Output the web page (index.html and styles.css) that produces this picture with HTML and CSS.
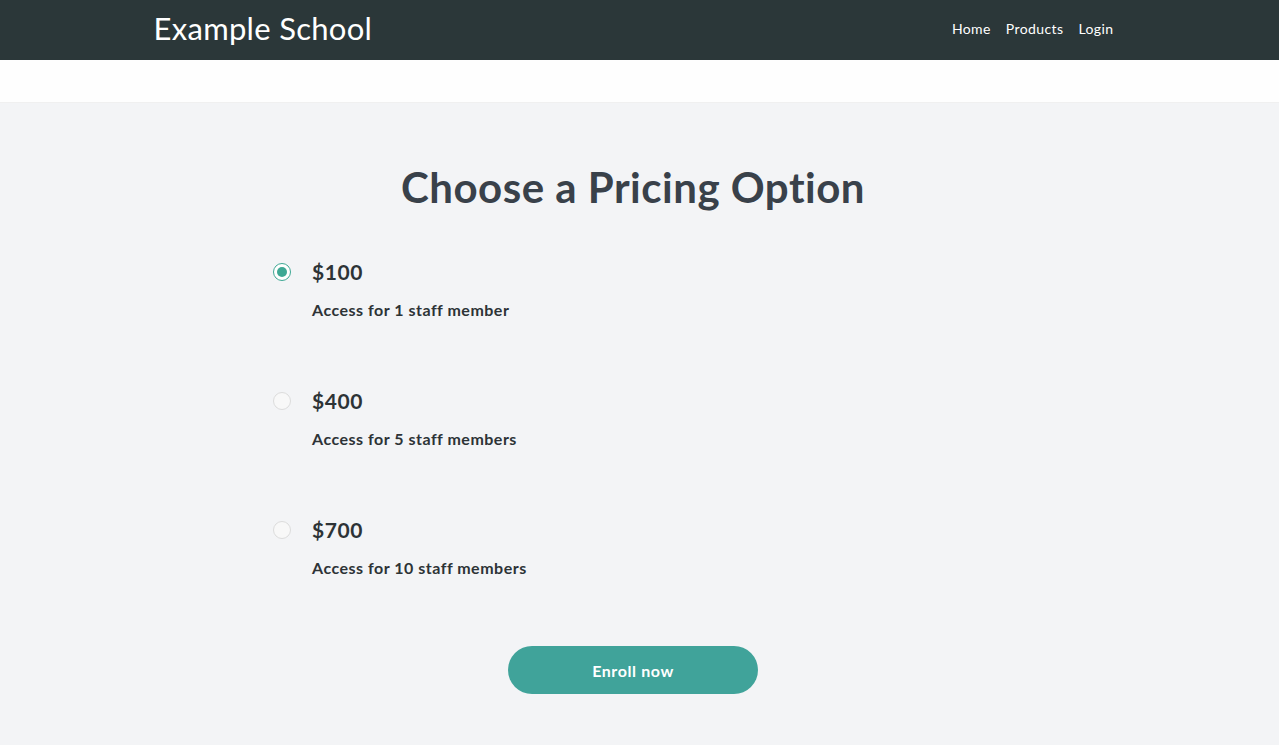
FILE: index.html
```html
<!DOCTYPE html>
<html lang="en">
<head>
  <meta charset="UTF-8" />
  <meta name="viewport" content="width=device-width, initial-scale=1" />
  <title>Example School - Pricing</title>
  <link rel="stylesheet" href="styles.css">
</head>
<body>

<header class="topbar">
  <div class="topbar-inner">
    <a class="brand" href="#">Example School</a>
    <nav class="nav">
      <a href="#">Home</a>
      <a href="#">Products</a>
      <a href="#">Login</a>
    </nav>
  </div>
</header>

<div class="subbar"></div>

<main class="pricing">
  <h1>Choose a Pricing Option</h1>

  <form class="options">
    <label class="option">
      <input type="radio" name="plan" value="100" checked />
      <span class="option-text">
        <span class="price">$100</span>
        <span class="desc">Access for 1 staff member</span>
      </span>
    </label>

    <label class="option">
      <input type="radio" name="plan" value="400" />
      <span class="option-text">
        <span class="price">$400</span>
        <span class="desc">Access for 5 staff members</span>
      </span>
    </label>

    <label class="option">
      <input type="radio" name="plan" value="700" />
      <span class="option-text">
        <span class="price">$700</span>
        <span class="desc">Access for 10 staff members</span>
      </span>
    </label>

    <div class="actions">
      <button type="button" class="enroll">Enroll now</button>
    </div>
  </form>
</main>

</body>
</html>
```

FILE: styles.css
```css
body {
  font-family: 'Lato', 'Noto Sans', sans-serif;
  background: #f3f4f6;
  margin: 0; padding: 0;
  color: #2d3336;
}
.topbar {
  background: #2b3739;
  height: 60px;
}
.topbar-inner {
  max-width: 972px;
  height: 100%;
  margin: 0 auto;
  display: flex;
  align-items: center;
  justify-content: space-between;
  padding: 0 12px 4px 0;
  box-sizing: border-box;
}
.brand {
  color: #fff;
  text-decoration: none;
  font-size: 31px;
  letter-spacing: 0.3px;
}
.nav {
  display: flex;
  gap: 15px;
}
.nav a {
  color: #fff;
  text-decoration: none;
  font-size: 14px;
  letter-spacing: 0.4px;
}
.subbar {
  background: #fefefe;
  height: 43px;
  border-bottom: 1px solid #f0f0f0;
  box-sizing: border-box;
}
.pricing {
  padding: 58px 13px 51px 0;
}
.pricing h1 {
  margin: 0;
  text-align: center;
  font-size: 42px;
  line-height: 52px;
  font-weight: 700;
  letter-spacing: 0.5px;
  color: #39414a;
}
.options {
  max-width: 720px;
  margin: 47px auto 0;
  display: flex;
  flex-direction: column;
  gap: 69px;
}
.option {
  display: flex;
  align-items: flex-start;
  gap: 21px;
  cursor: pointer;
}
.option input {
  appearance: none;
  -webkit-appearance: none;
  width: 18px;
  height: 18px;
  margin: 3px 0 0;
  border: 1px solid #dcdcdc;
  border-radius: 50%;
  background: #f8f8f8;
  display: grid;
  place-items: center;
  flex-shrink: 0;
}
.option input:checked {
  border-color: #3ea894;
  background: #fff;
}
.option input:checked::after {
  content: "";
  width: 10px;
  height: 10px;
  border-radius: 50%;
  background: #3ea894;
}
.option-text {
  display: flex;
  flex-direction: column;
  gap: 16px;
}
.price {
  font-size: 21px;
  line-height: 24px;
  font-weight: 700;
  letter-spacing: 0.6px;
  color: #2d3336;
}
.desc {
  font-size: 16px;
  line-height: 20px;
  font-weight: 700;
  letter-spacing: 0.5px;
  color: #2d3336;
}
.actions {
  display: flex;
  justify-content: center;
  margin-top: -1px;
}
.enroll {
  width: 250px;
  height: 48px;
  border: none;
  border-radius: 24px;
  background: #40a39a;
  color: #fff;
  font-family: inherit;
  font-size: 16px;
  font-weight: 700;
  letter-spacing: 0.6px;
  cursor: pointer;
}
.enroll:hover {
  background: #368d85;
}
```
